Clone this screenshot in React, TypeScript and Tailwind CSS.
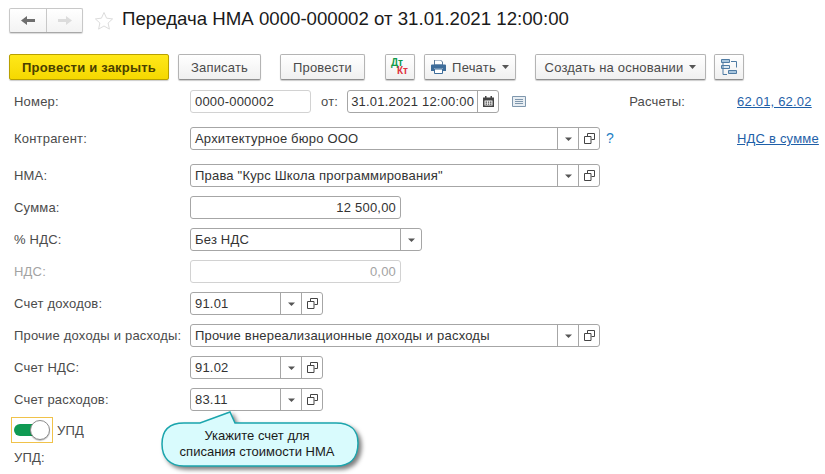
import React from "react";

const Arrow = () => (
  <div className="w-[20px] flex items-center justify-center self-stretch">
    <svg width="7" height="4"><path d="M0 0.5h7L3.5 4z" fill="#555" /></svg>
  </div>
);
const Open = () => (
  <div className="w-[21px] flex items-center justify-center border-l border-[#a6a6a6] self-stretch">
    <svg width="11" height="11" viewBox="0 0 11 11" fill="none" stroke="#444"><path d="M3.5 3.5V.5h7v6H7.5M.5 3.5h6.500v7H.5z" /></svg>
  </div>
);
const Caret = () => <svg width="7" height="4" className="ml-[6px]"><path d="M0 0h7L3.500 4z" fill="#555" /></svg>;

function Field({ w, text, sel, open, right, disabled, light }: { w: string; text: string; sel?: boolean; open?: boolean; right?: boolean; disabled?: boolean; light?: boolean }) {
  return (
    <div className={`${w} h-[23px] flex items-center bg-white rounded-[3px] border ${disabled || light ? "border-[#d2d2d2]" : "border-[#a6a6a6]"}`}>
      <div className={`flex-1 px-[4px] whitespace-nowrap ${right ? "text-right" : ""} ${disabled ? "text-[#a3a3a3]" : "text-[#333]"}`}>{text}</div>
      {sel && <div className="border-l border-[#a6a6a6] self-stretch flex"><Arrow /></div>}
      {open && <Open />}
    </div>
  );
}

function Row({ label, mt, disabled, children }: { label: string; mt: string; disabled?: boolean; children: React.ReactNode }) {
  return (
    <div className={`${mt} flex items-center h-[23px]`}>
      <div className={`w-[176px] shrink-0 whitespace-nowrap ${disabled ? "text-[#a3a3a3]" : "text-[#4b4b4b]"}`}>{label}</div>
      {children}
    </div>
  );
}

function Btn({ children, w, cls }: { children: React.ReactNode; w: string; cls?: string }) {
  return (
    <div className={`${w} ${cls ?? ""} h-[26px] flex items-center justify-center rounded-[2px] border border-[#b4b4b4] border-b-[#8f8f8f] bg-gradient-to-b from-white to-[#f0f0f0] shadow-[0_1px_1px_rgba(0,0,0,0.2)] text-[#4b4b4b] whitespace-nowrap`}>
      {children}
    </div>
  );
}

export default function App() {
  return (
    <div className="relative w-[825px] h-[474px] overflow-hidden bg-white text-[13px] leading-[15px] tracking-[0.2px] font-['Liberation_Sans',Arial,sans-serif]">
      <div className="flex items-center pl-[9px] pt-[8px] h-[33px]">
        <div className="flex w-[74px] h-[25px] rounded-[2px] border border-[#c8c8c8] border-b-[#a8a8a8] shadow-[0_1px_1px_rgba(0,0,0,0.15)] bg-gradient-to-b from-white to-[#f3f3f3]">
          <div className="w-[37px] flex items-center justify-center border-r border-[#c8c8c8]">
            <svg width="15" height="11" viewBox="0 0 15 11"><path d="M0 5.500L6 1v3h8v3H6v3z" fill="#6e6e6e" /></svg>
          </div>
          <div className="flex-1 flex items-center justify-center">
            <svg width="15" height="11" viewBox="0 0 15 11"><path d="M15 5.500L9 1v3H1v3h8v3z" fill="#dcdcdc" /></svg>
          </div>
        </div>
        <svg width="20" height="20" viewBox="0 0 20 20" className="ml-[11px]" fill="#fff" stroke="#dcdcdc"><path d="M10 1.500l2.600 5.700 6 .7-4.500 4.100 1.300 6.100L10 15l-5.400 3.100 1.300-6.100L1.400 7.900l6-.7z" /></svg>
        <div className="ml-[8px] mb-[3px] text-[18.67px] leading-[22px] text-[#1a1a1a] tracking-normal whitespace-nowrap">Передача НМА 0000-000002 от 31.01.2021 12:00:00</div>
      </div>

      <div className="flex items-center pl-[9px] mt-[21px]">
        <div className="w-[160px] h-[26px] flex items-center justify-center rounded-[2px] border border-[#b8a000] bg-gradient-to-b from-[#ffe818] to-[#f5d800] shadow-[0_1px_1px_rgba(0,0,0,0.2)] font-bold text-[#4a4000] whitespace-nowrap">Провести и закрыть</div>
        <Btn w="w-[83px]" cls="ml-[9px]">Записать</Btn>
        <Btn w="w-[85px]" cls="ml-[19px]">Провести</Btn>
        <Btn w="w-[30px]" cls="ml-[20px]">
          <div className="relative w-[20px] h-[16px] font-bold text-[10px] leading-[8px] tracking-normal">
            <span className="absolute left-[1px] top-0 text-[#0e9a4a]">Дт</span>
            <span className="absolute left-[7px] top-[8px] text-[#e0323c]">Кт</span>
          </div>
        </Btn>
        <Btn w="w-[92px]" cls="ml-[9px]">
          <svg width="15" height="14" viewBox="0 0 15 14" className="mr-[6px]">
            <path d="M3.500 0h6l2 2v3h-8z" fill="#fff" stroke="#5c7a99" />
            <path d="M0 5.500a1 1 0 011-1h13a1 1 0 011 1V11h-3V8.500H3V11H0z" fill="#3d6c9a" />
            <path d="M3.500 9h8v4.500h-8z" fill="#fff" stroke="#3d6c9a" />
          </svg>
          Печать
          <Caret />
        </Btn>
        <Btn w="w-[171px]" cls="ml-[19px]">Создать на основании<Caret /></Btn>
        <Btn w="w-[30px]" cls="ml-[8px]">
          <svg width="16" height="16" viewBox="0 0 16 16" fill="none" stroke="#4f7ba3">
            <path d="M.5.500h8v3h-8zM7.500 11.500h8v3h-8z" fill="#a9c6de" />
            <path d="M.5 6.500h8v3h-8z" fill="#dbe8f2" />
            <path d="M10 2.500h5.500v6M2 4v11.500h4" />
          </svg>
        </Btn>
      </div>

      <div className="relative pl-[14px] mt-[10px]">
        <Row label="Номер:" mt="mt-0">
          <Field w="w-[121px]" text="0000-000002" light />
          <span className="ml-[10px] text-[#4b4b4b]">от:</span>
          <div className="ml-[9px] w-[152px] h-[23px] flex items-center bg-white rounded-[3px] border border-[#a6a6a6]">
            <div className="flex-1 pl-[3px] text-[#333] whitespace-nowrap">31.01.2021 12:00:00</div>
            <div className="w-[21px] self-stretch border-l border-[#a6a6a6] flex items-center justify-center">
              <svg width="11" height="11" viewBox="0 0 11 11"><path d="M0 1.500h11V11H0z" fill="#444" /><path d="M2 0h1.500v2H2zM7.500 0H9v2H7.500z" fill="#444" /><path d="M1.500 4.500h8v5h-8z" fill="#fff" /><path d="M2.500 5.500h1.500v1.200H2.500zM4.800 5.500h1.500v1.200H4.800zM7 5.500h1.500v1.200H7zM2.500 7.500h1.500v1.200H2.500zM4.800 7.500h1.500v1.200H4.800zM7 7.500h1.500v1.200H7z" fill="#444" /></svg>
            </div>
          </div>
          <svg width="14" height="11" viewBox="0 0 14 11" className="ml-[13px]" fill="#e8eef3" stroke="#7f97ad"><path d="M.5.500h13v10H.5z" /><path d="M3 3.500h8M3 5.500h8M3 7.500h8" /></svg>
          <span className="ml-[103px] text-[#4b4b4b]">Расчеты:</span>
          <span className="ml-[52px] text-[#1f5fa8] underline whitespace-nowrap">62.01, 62.02</span>
        </Row>
        <Row label="Контрагент:" mt="mt-[14px]">
          <Field w="w-[410px]" text="Архитектурное бюро ООО" sel open />
          <span className="ml-[6px] text-[14px] text-[#1f7fc4]">?</span>
          <span className="ml-[123px] text-[#1f5fa8] underline whitespace-nowrap">НДС в сумме</span>
        </Row>
        <Row label="НМА:" mt="mt-[14px]">
          <Field w="w-[410px]" text={'Права "Курс Школа программирования"'} sel open />
        </Row>
        <Row label="Сумма:" mt="mt-[9px]">
          <Field w="w-[211px]" text="12 500,00" right />
        </Row>
        <Row label="% НДС:" mt="mt-[9px]">
          <Field w="w-[232px]" text="Без НДС" sel />
        </Row>
        <Row label="НДС:" mt="mt-[9px]" disabled>
          <Field w="w-[211px]" text="0,00" right disabled />
        </Row>
        <Row label="Счет доходов:" mt="mt-[9px]">
          <Field w="w-[133px]" text="91.01" sel open />
        </Row>
        <Row label="Прочие доходы и расходы:" mt="mt-[9px]">
          <Field w="w-[410px]" text="Прочие внереализационные доходы и расходы" sel open />
        </Row>
        <Row label="Счет НДС:" mt="mt-[9px]">
          <Field w="w-[133px]" text="91.02" sel open />
        </Row>
        <Row label="Счет расходов:" mt="mt-[9px]">
          <Field w="w-[133px]" text="83.11" sel open />
        </Row>
        <div className="flex items-center mt-[6px] -ml-[3px]">
          <div className="w-[42px] h-[26px] border border-[#f0c24a] flex items-center pl-[2px]">
            <div className="relative w-[33px] h-[12px] bg-[#0f9a52] rounded-full">
              <div className="absolute right-[-3px] top-[-4px] w-[20px] h-[20px] rounded-full bg-white border border-[#8c8c8c] shadow-[0_1px_1px_rgba(0,0,0,0.25)]" />
            </div>
          </div>
          <span className="ml-[4px] text-[#4b4b4b]">УПД</span>
        </div>
        <div className="mt-[7px] text-[#4b4b4b]">УПД:</div>
      </div>

      <div className="absolute left-[160px] top-[408px] w-[204px] h-[66px]">
        <svg width="204" height="66" viewBox="0 0 204 66" className="absolute inset-0" style={{ filter: "drop-shadow(3px 3px 2px rgba(0,0,0,0.5))" }}>
          <path d="M70 4L75 15H176C190 15 198 22 198 35C198 50 190 58 176 58H24C10 58 2 50 2 36C2 22 10 15 24 15H40z" fill="#d9fbfd" stroke="#1aa5ad" strokeWidth="1.500" />
        </svg>
        <div className="absolute left-0 w-[194px] top-[20px] text-center text-[13px] leading-[16px] text-[#1a1a1a] tracking-normal">Укажите счет для<br />списания стоимости НМА</div>
      </div>
    </div>
  );
}
